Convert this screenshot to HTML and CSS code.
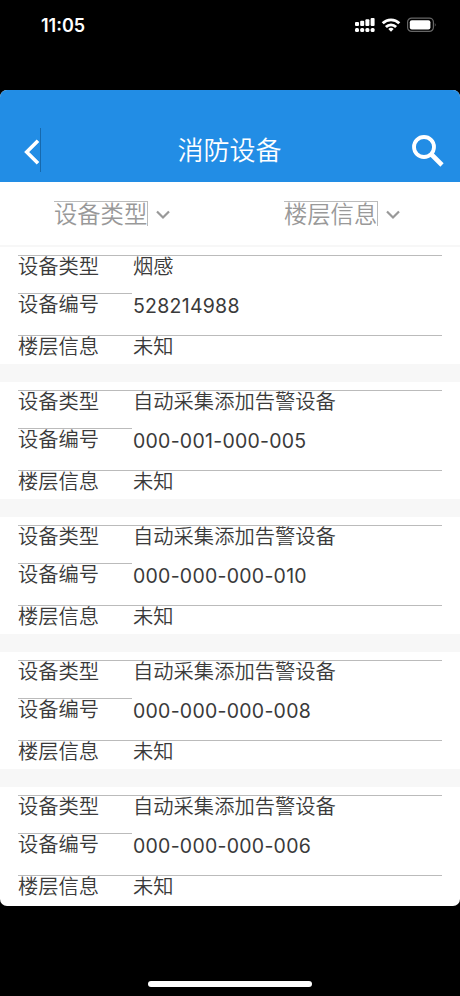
FILE: index.html
```html
<!DOCTYPE html>
<html lang="zh-CN">
<head>
    <meta charset="UTF-8">
    <meta name="viewport" content="width=device-width, initial-scale=1.0">
    <title>消防设备</title>
    <link rel="stylesheet" href="styles.css">
</head>
<body>
    <div class="status-bar">
        <span class="time">11:05</span>
        <div class="status-icons">
            <svg class="signal" width="20" height="16" viewBox="0 0 20 16" fill="#fff">
                <rect x="0" y="5" width="4" height="4" rx="1"/>
                <rect x="5.2" y="3.8" width="4" height="5.2" rx="1"/>
                <rect x="10.4" y="2.2" width="4" height="6.8" rx="1"/>
                <rect x="15.6" y="1" width="4" height="8" rx="1"/>
                <rect x="0" y="11" width="4" height="4" rx="1.5"/>
                <rect x="5.2" y="11" width="4" height="4" rx="1.5"/>
                <rect x="10.4" y="11" width="4" height="4" rx="1.5"/>
                <rect x="15.6" y="11" width="4" height="4" rx="1.5"/>
            </svg>
            <svg class="wifi" width="20" height="16" viewBox="0 0 20 16" fill="none" stroke="#fff" stroke-width="2.8">
                <path d="M1.7 6.3 A11.7 11.7 0 0 1 18.3 6.3"/>
                <path d="M4.9 9.9 A7.2 7.2 0 0 1 15.1 9.9"/>
                <path d="M10 14.8 L7.3 12.1 A3.8 3.8 0 0 1 12.7 12.1 Z" fill="#fff" stroke="none"/>
            </svg>
            <svg class="battery" width="30" height="16" viewBox="0 0 30 16">
                <rect x="0.6" y="1.1" width="25.8" height="13.3" rx="4" fill="none" stroke="#666" stroke-width="1.2"/>
                <rect x="2.8" y="3.2" width="20.6" height="9.2" rx="2" fill="#fff"/>
                <path d="M27.8 5.7 Q29.6 7.7 27.8 9.8 Z" fill="#666"/>
            </svg>
        </div>
    </div>

    <div class="app">
        <header class="header">
            <div class="back">
                <svg width="16" height="26" viewBox="0 0 16 26" fill="none" stroke="#fff" stroke-width="3.6">
                    <path d="M14 1.7 L2.7 13 L14 24.3"/>
                </svg>
            </div>
            <h1>消防设备</h1>
            <svg class="search" width="32" height="32" viewBox="0 0 32 32" fill="none" stroke="#fff">
                <circle cx="12" cy="12" r="10" stroke-width="3.8"/>
                <path d="M19.5 19.5 L30 30" stroke-width="4.6"/>
            </svg>
        </header>

        <div class="filters">
            <div class="filter">
                <span>设备类型</span>
                <svg width="14" height="10" viewBox="0 0 14 10" fill="none" stroke="#999" stroke-width="2.2">
                    <path d="M1 1.5 L7 7.5 L13 1.5"/>
                </svg>
            </div>
            <div class="filter">
                <span>楼层信息</span>
                <svg width="14" height="10" viewBox="0 0 14 10" fill="none" stroke="#999" stroke-width="2.2">
                    <path d="M1 1.5 L7 7.5 L13 1.5"/>
                </svg>
            </div>
        </div>

        <div class="list">
            <div class="card">
                <div class="row type"><label>设备类型</label><p>烟感</p></div>
                <div class="row number"><label>设备编号</label><p>528214988</p></div>
                <div class="row floor"><label>楼层信息</label><p>未知</p></div>
            </div>
            <div class="card">
                <div class="row type"><label>设备类型</label><p>自动采集添加告警设备</p></div>
                <div class="row number"><label>设备编号</label><p>000-001-000-005</p></div>
                <div class="row floor"><label>楼层信息</label><p>未知</p></div>
            </div>
            <div class="card">
                <div class="row type"><label>设备类型</label><p>自动采集添加告警设备</p></div>
                <div class="row number"><label>设备编号</label><p>000-000-000-010</p></div>
                <div class="row floor"><label>楼层信息</label><p>未知</p></div>
            </div>
            <div class="card">
                <div class="row type"><label>设备类型</label><p>自动采集添加告警设备</p></div>
                <div class="row number"><label>设备编号</label><p>000-000-000-008</p></div>
                <div class="row floor"><label>楼层信息</label><p>未知</p></div>
            </div>
            <div class="card">
                <div class="row type"><label>设备类型</label><p>自动采集添加告警设备</p></div>
                <div class="row number"><label>设备编号</label><p>000-000-000-006</p></div>
                <div class="row floor"><label>楼层信息</label><p>未知</p></div>
            </div>
        </div>
    </div>

    <div class="home-bar"></div>
</body>
</html>
```
FILE: styles.css
```css
* {
    margin: 0;
    padding: 0;
    box-sizing: border-box;
}

body {
    font-family: Inter, "Noto Sans CJK SC DemiLight", "Noto Sans CJK SC", sans-serif;
    background: #000;
    color: #3a3a3a;
    height: 996px;
    overflow: hidden;
}

.status-bar {
    display: flex;
    justify-content: space-between;
    height: 90px;
    padding: 17px 23px 0 41px;
}

.time {
    color: #fff;
    font-size: 18px;
    font-weight: 600;
    line-height: 18px;
}

.status-icons {
    display: flex;
    gap: 6px;
}

.app {
    height: 816px;
    background: #fff;
    border-radius: 7px;
    overflow: hidden;
}

.header {
    display: flex;
    justify-content: space-between;
    height: 92px;
    padding: 38px 16px 0 24px;
    background: #228de5;
}

.back {
    display: flex;
    align-items: center;
    width: 17px;
    height: 44px;
    border-right: 1px solid #1769ad;
}

.back svg {
    margin-top: 4px;
}

.header h1 {
    margin-left: 6px;
    color: #fff;
    font-size: 26px;
    font-weight: 400;
    line-height: 46px;
}

.search {
    margin-top: 7px;
}

.filters {
    display: flex;
    height: 65px;
    padding-top: 19px;
    border-bottom: 2px solid #f7f7f7;
}

.filter {
    display: flex;
    width: 50%;
    padding-left: 54px;
    color: #999;
}

.filter span {
    height: 25px;
    font-size: 23.3px;
    line-height: 25px;
    border-top: 1px solid #bbb;
    border-right: 1px solid #bbb;
}

.filter svg {
    margin: 9px 0 0 8px;
}

.card {
    height: 135px;
    padding: 8px 18px 0;
    border-bottom: 18px solid #f7f7f7;
}

.card:last-child {
    border-bottom: none;
}

.row {
    display: flex;
    font-size: 20.3px;
    line-height: 22px;
}

.row label {
    width: 114px;
    border-top: 1px solid #bbb;
}

.row p {
    flex: 1;
    padding-left: 1px;
    border-top: 1px solid #bbb;
}

.type {
    height: 38px;
}

.number {
    height: 42px;
}

.number p {
    padding-top: 2px;
    border-top: none;
    font-size: 19.5px;
    letter-spacing: 0.25px;
}

.home-bar {
    width: 164px;
    height: 6px;
    margin: 75px auto 0;
    background: #fff;
    border-radius: 3px;
}
```
